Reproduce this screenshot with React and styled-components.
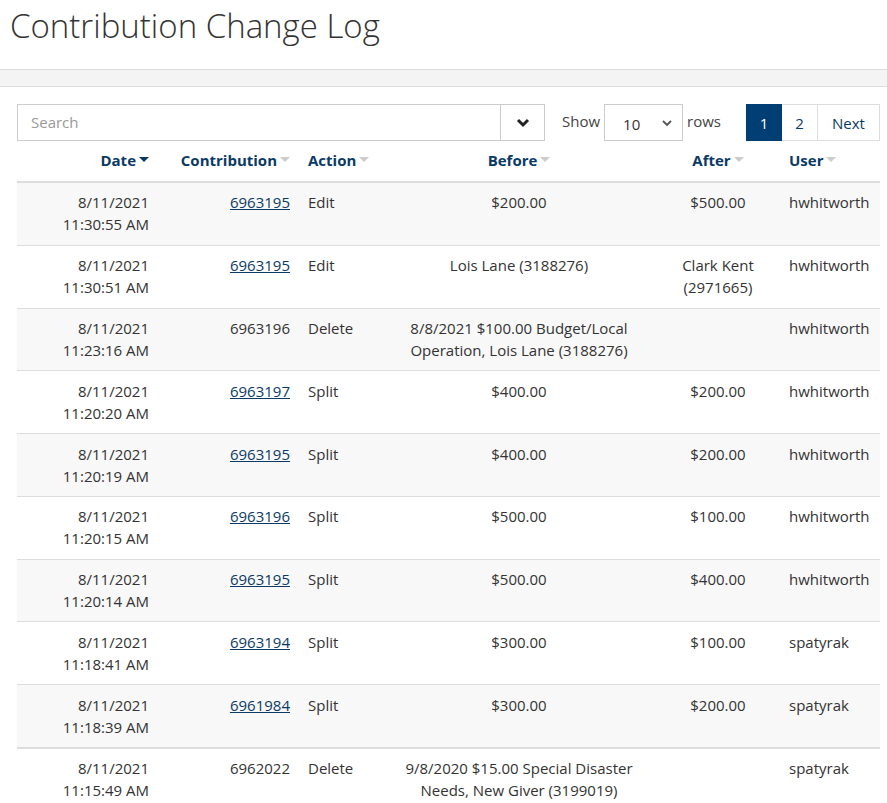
import React from "react";
import styled, { createGlobalStyle } from "styled-components";

const GlobalStyle = createGlobalStyle`
  body {
    margin: 0;
    background: #fff;
    font-family: "Open Sans", "Liberation Sans", sans-serif;
    color: #333;
  }
`;

const rows = [
  { date: "8/11/2021", time: "11:30:55 AM", id: "6963195", link: true, action: "Edit", before: "$200.00", after: "$500.00", user: "hwhitworth" },
  { date: "8/11/2021", time: "11:30:51 AM", id: "6963195", link: true, action: "Edit", before: "Lois Lane (3188276)", after: "Clark Kent (2971665)", user: "hwhitworth" },
  { date: "8/11/2021", time: "11:23:16 AM", id: "6963196", link: false, action: "Delete", before: "8/8/2021 $100.00 Budget/Local Operation, Lois Lane (3188276)", after: "", user: "hwhitworth" },
  { date: "8/11/2021", time: "11:20:20 AM", id: "6963197", link: true, action: "Split", before: "$400.00", after: "$200.00", user: "hwhitworth" },
  { date: "8/11/2021", time: "11:20:19 AM", id: "6963195", link: true, action: "Split", before: "$400.00", after: "$200.00", user: "hwhitworth" },
  { date: "8/11/2021", time: "11:20:15 AM", id: "6963196", link: true, action: "Split", before: "$500.00", after: "$100.00", user: "hwhitworth" },
  { date: "8/11/2021", time: "11:20:14 AM", id: "6963195", link: true, action: "Split", before: "$500.00", after: "$400.00", user: "hwhitworth" },
  { date: "8/11/2021", time: "11:18:41 AM", id: "6963194", link: true, action: "Split", before: "$300.00", after: "$100.00", user: "spatyrak" },
  { date: "8/11/2021", time: "11:18:39 AM", id: "6961984", link: true, action: "Split", before: "$300.00", after: "$200.00", user: "spatyrak" },
  { date: "8/11/2021", time: "11:15:49 AM", id: "6962022", link: false, action: "Delete", before: "9/8/2020 $15.00 Special Disaster Needs, New Giver (3199019)", after: "", user: "spatyrak", split: true },
];

const columns = [
  { key: "date", label: "Date", width: 141, align: "right", sorted: true },
  { key: "id", label: "Contribution", width: 141, align: "right" },
  { key: "action", label: "Action", width: 83, align: "left" },
  { key: "before", label: "Before", width: 274, align: "center" },
  { key: "after", label: "After", width: 124, align: "center" },
  { key: "user", label: "User", width: 100, align: "left" },
];

export default function App() {
  return (
    <>
      <GlobalStyle />
      <Title>Contribution Change Log</Title>
      <ToolStrip />
      <Content>
        <Controls>
          <SearchBox>
            <SearchInput placeholder="Search" />
            <SearchToggle>
              <svg width="14" height="10" viewBox="0 0 14 10">
                <polyline points="2,2 7,7 12,2" fill="none" stroke="#222" strokeWidth="3" />
              </svg>
            </SearchToggle>
          </SearchBox>
          <RowsPicker>
            <span>Show</span>
            <Select>
              <span>10</span>
              <svg width="10" height="7" viewBox="0 0 10 7">
                <polyline points="1,1 5,5 9,1" fill="none" stroke="#555" strokeWidth="1.8" />
              </svg>
            </Select>
            <span>rows</span>
          </RowsPicker>
          <Pager>
            <PageButton $active>1</PageButton>
            <PageButton>2</PageButton>
            <PageButton $wide>Next</PageButton>
          </Pager>
        </Controls>
        <Table>
          <colgroup>
            {columns.map((c) => (
              <col key={c.key} style={{ width: c.width }} />
            ))}
          </colgroup>
          <thead>
            <tr>
              {columns.map((c) => (
                <Th key={c.key} $align={c.align}>
                  {c.label}
                  <Caret $on={c.sorted} />
                </Th>
              ))}
            </tr>
          </thead>
          <tbody>
            {rows.map((r, i) => (
              <Row key={i} $striped={i % 2 === 0} $split={r.split}>
                <Td $align="right">
                  {r.date}
                  <br />
                  {r.time}
                </Td>
                <Td $align="right">{r.link ? <IdLink href="#">{r.id}</IdLink> : r.id}</Td>
                <Td $align="left">{r.action}</Td>
                <Td $align="center">{r.before}</Td>
                <Td $align="center">{r.after}</Td>
                <Td $align="left">{r.user}</Td>
              </Row>
            ))}
          </tbody>
        </Table>
      </Content>
    </>
  );
}

const Title = styled.h1`
  margin: 0;
  padding: 3px 10px 0;
  height: 66px;
  box-sizing: border-box;
  font-family: "Open Sans", "Liberation Sans", sans-serif;
  font-weight: 300;
  font-size: 33px;
  line-height: 46px;
  color: #333;
`;

const ToolStrip = styled.div`
  height: 16px;
  margin-top: 3px;
  background: #f4f4f4;
  border-top: 1px solid #dcdcdc;
  border-bottom: 1px solid #dcdcdc;
`;

const Content = styled.div`
  padding: 17px 7px 0 17px;
`;

const Controls = styled.div`
  display: flex;
  align-items: center;
  height: 37px;
  font-size: 15px;
`;

const SearchBox = styled.div`
  display: flex;
  width: 528px;
  height: 37px;
  box-sizing: border-box;
  border: 1px solid #ccc;
`;

const SearchInput = styled.input`
  flex: 1;
  border: none;
  outline: none;
  padding: 0 13px 2px;
  font-family: inherit;
  font-size: 15px;
  color: #333;
  &::placeholder {
    color: #999;
  }
`;

const SearchToggle = styled.div`
  width: 43px;
  display: flex;
  align-items: center;
  justify-content: center;
  border-left: 1px solid #ccc;
`;

const RowsPicker = styled.div`
  display: flex;
  align-items: center;
  margin-left: 17px;
  color: #444;
  gap: 4px;
  height: 100%;
  & > span {
    position: relative;
    top: -2px;
  }
`;

const Select = styled.div`
  width: 79px;
  height: 37px;
  box-sizing: border-box;
  border: 1px solid #ccc;
  display: flex;
  align-items: center;
  justify-content: space-between;
  padding: 2px 10px 0 18px;
  color: #333;
`;

const Pager = styled.div`
  display: flex;
  margin-left: auto;
  height: 37px;
`;

const PageButton = styled.div`
  width: ${(p) => (p.$wide ? "62px" : "36px")};
  box-sizing: border-box;
  display: flex;
  align-items: center;
  justify-content: center;
  border: 1px solid ${(p) => (p.$active ? "#003e74" : "#ddd")};
  border-left-width: ${(p) => (p.$active ? "1px" : "0")};
  background: ${(p) => (p.$active ? "#003e74" : "#fff")};
  color: ${(p) => (p.$active ? "#fff" : "#0b3a66")};
  font-size: 15px;
`;

const Table = styled.table`
  width: 863px;
  table-layout: fixed;
  border-collapse: collapse;
  font-size: 15px;
  line-height: 22px;
`;

const Th = styled.th`
  padding: 8px 9px 10px;
  text-align: ${(p) => p.$align};
  font-weight: 700;
  color: #0b3a66;
  border-bottom: 2px solid #ddd;
  white-space: nowrap;
`;

const Caret = styled.span`
  display: inline-block;
  margin-left: 3px;
  width: 0;
  height: 0;
  border-left: 5px solid transparent;
  border-right: 5px solid transparent;
  border-top: 5px solid ${(p) => (p.$on ? "#0b3a66" : "#ccc")};
  vertical-align: middle;
  position: relative;
  top: -2px;
`;

const Row = styled.tr`
  background: ${(p) => (p.$striped ? "#f8f8f8" : "#fff")};
  border-top: ${(p) => (p.$split ? "2px solid #ddd" : "1px solid #ddd")};
  &:first-child {
    border-top: none;
  }
`;

const Td = styled.td`
  padding: 8.4px 9px 9.4px;
  vertical-align: top;
  text-align: ${(p) => p.$align};
  color: #333;
`;

const IdLink = styled.a`
  color: #0b3a66;
  text-decoration: underline;
`;
